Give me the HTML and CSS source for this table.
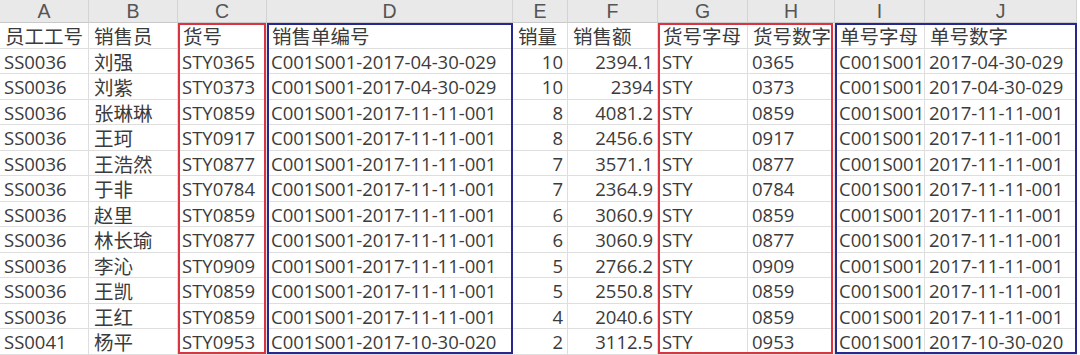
FILE: index.html
```html
<!DOCTYPE html>
<html lang="zh-CN">
<head>
<meta charset="utf-8">
<title>销售数据</title>
<link rel="stylesheet" href="styles.css">
</head>
<body>
<div class="sheet">
  <div class="grid">
    <div class="hd">A</div><div class="hd">B</div><div class="hd">C</div><div class="hd">D</div><div class="hd">E</div><div class="hd">F</div><div class="hd">G</div><div class="hd">H</div><div class="hd">I</div><div class="hd">J</div>

    <div class="c zh">员工工号</div><div class="c zh">销售员</div><div class="c zh">货号</div><div class="c zh">销售单编号</div><div class="c zh">销量</div><div class="c zh">销售额</div><div class="c zh">货号字母</div><div class="c zh">货号数字</div><div class="c zh">单号字母</div><div class="c zh">单号数字</div>

    <div class="c">SS0036</div><div class="c zh">刘强</div><div class="c">STY0365</div><div class="c">C001S001-2017-04-30-029</div><div class="c num">10</div><div class="c num">2394.1</div><div class="c">STY</div><div class="c">0365</div><div class="c">C001S001</div><div class="c">2017-04-30-029</div>

    <div class="c">SS0036</div><div class="c zh">刘紫</div><div class="c">STY0373</div><div class="c">C001S001-2017-04-30-029</div><div class="c num">10</div><div class="c num">2394</div><div class="c">STY</div><div class="c">0373</div><div class="c">C001S001</div><div class="c">2017-04-30-029</div>

    <div class="c">SS0036</div><div class="c zh">张琳琳</div><div class="c">STY0859</div><div class="c">C001S001-2017-11-11-001</div><div class="c num">8</div><div class="c num">4081.2</div><div class="c">STY</div><div class="c">0859</div><div class="c">C001S001</div><div class="c">2017-11-11-001</div>

    <div class="c">SS0036</div><div class="c zh">王珂</div><div class="c">STY0917</div><div class="c">C001S001-2017-11-11-001</div><div class="c num">8</div><div class="c num">2456.6</div><div class="c">STY</div><div class="c">0917</div><div class="c">C001S001</div><div class="c">2017-11-11-001</div>

    <div class="c">SS0036</div><div class="c zh">王浩然</div><div class="c">STY0877</div><div class="c">C001S001-2017-11-11-001</div><div class="c num">7</div><div class="c num">3571.1</div><div class="c">STY</div><div class="c">0877</div><div class="c">C001S001</div><div class="c">2017-11-11-001</div>

    <div class="c">SS0036</div><div class="c zh">于非</div><div class="c">STY0784</div><div class="c">C001S001-2017-11-11-001</div><div class="c num">7</div><div class="c num">2364.9</div><div class="c">STY</div><div class="c">0784</div><div class="c">C001S001</div><div class="c">2017-11-11-001</div>

    <div class="c">SS0036</div><div class="c zh">赵里</div><div class="c">STY0859</div><div class="c">C001S001-2017-11-11-001</div><div class="c num">6</div><div class="c num">3060.9</div><div class="c">STY</div><div class="c">0859</div><div class="c">C001S001</div><div class="c">2017-11-11-001</div>

    <div class="c">SS0036</div><div class="c zh">林长瑜</div><div class="c">STY0877</div><div class="c">C001S001-2017-11-11-001</div><div class="c num">6</div><div class="c num">3060.9</div><div class="c">STY</div><div class="c">0877</div><div class="c">C001S001</div><div class="c">2017-11-11-001</div>

    <div class="c">SS0036</div><div class="c zh">李沁</div><div class="c">STY0909</div><div class="c">C001S001-2017-11-11-001</div><div class="c num">5</div><div class="c num">2766.2</div><div class="c">STY</div><div class="c">0909</div><div class="c">C001S001</div><div class="c">2017-11-11-001</div>

    <div class="c">SS0036</div><div class="c zh">王凯</div><div class="c">STY0859</div><div class="c">C001S001-2017-11-11-001</div><div class="c num">5</div><div class="c num">2550.8</div><div class="c">STY</div><div class="c">0859</div><div class="c">C001S001</div><div class="c">2017-11-11-001</div>

    <div class="c">SS0036</div><div class="c zh">王红</div><div class="c">STY0859</div><div class="c">C001S001-2017-11-11-001</div><div class="c num">4</div><div class="c num">2040.6</div><div class="c">STY</div><div class="c">0859</div><div class="c">C001S001</div><div class="c">2017-11-11-001</div>

    <div class="c">SS0041</div><div class="c zh">杨平</div><div class="c">STY0953</div><div class="c">C001S001-2017-10-30-020</div><div class="c num">2</div><div class="c num">3112.5</div><div class="c">STY</div><div class="c">0953</div><div class="c">C001S001</div><div class="c">2017-10-30-020</div>
  </div>
  <div class="marks">
    <div class="box red col-c"></div>
    <div class="box blue col-d"></div>
    <div class="box red col-gh"></div>
    <div class="box blue col-ij"></div>
  </div>
</div>
</body>
</html>
```
FILE: styles.css
```css
html, body {
  margin: 0;
  padding: 0;
  background: #ffffff;
}

.sheet {
  display: grid;
  width: 1080px;
  height: 355px;
  overflow: hidden;
  background: #ffffff;
}

.grid,
.marks {
  grid-area: 1 / 1;
  display: grid;
  grid-template-columns: 89px 89px 89px 246px 55px 90px 90px 87px 90px 152px;
  grid-template-rows: 23px repeat(13, 25.5px);
}

.marks {
  pointer-events: none;
}

.hd {
  box-sizing: border-box;
  background: #e9e9e9;
  border-right: 1px solid #d3d3d3;
  border-bottom: 1px solid #c9c9c9;
  color: #555555;
  font-family: "Liberation Sans", Arial, sans-serif;
  font-size: 19.5px;
  line-height: 23px;
  text-align: center;
}

.c {
  box-sizing: border-box;
  display: flex;
  align-items: center;
  min-width: 0;
  padding: 2px 3px 0 4px;
  border-right: 1px solid #dedede;
  border-bottom: 1px solid #dedede;
  color: #3b3b3b;
  font-family: "Open Sans", "Liberation Sans", Arial, sans-serif;
  font-size: 18.5px;
  line-height: 22px;
  letter-spacing: 0;
  white-space: nowrap;
}

.c.zh {
  font-family: "Noto Sans CJK SC", "Noto Sans", sans-serif;
  font-size: 19.5px;
  line-height: 22px;
  padding-left: 5px;
}

.c.num {
  justify-content: flex-end;
  padding-right: 4px;
}

.box {
  grid-row: 2 / 15;
  box-sizing: border-box;
  border: 2px solid;
  margin-bottom: 1px;
}

.red {
  border-color: #d9343f;
}

.blue {
  border-color: #27288f;
}

.col-c { grid-column: 3 / 4; margin-right: 1px; }
.col-d { grid-column: 4 / 5; }
.col-gh { grid-column: 7 / 9; margin-right: 2px; }
.col-ij { grid-column: 9 / 11; }
```
